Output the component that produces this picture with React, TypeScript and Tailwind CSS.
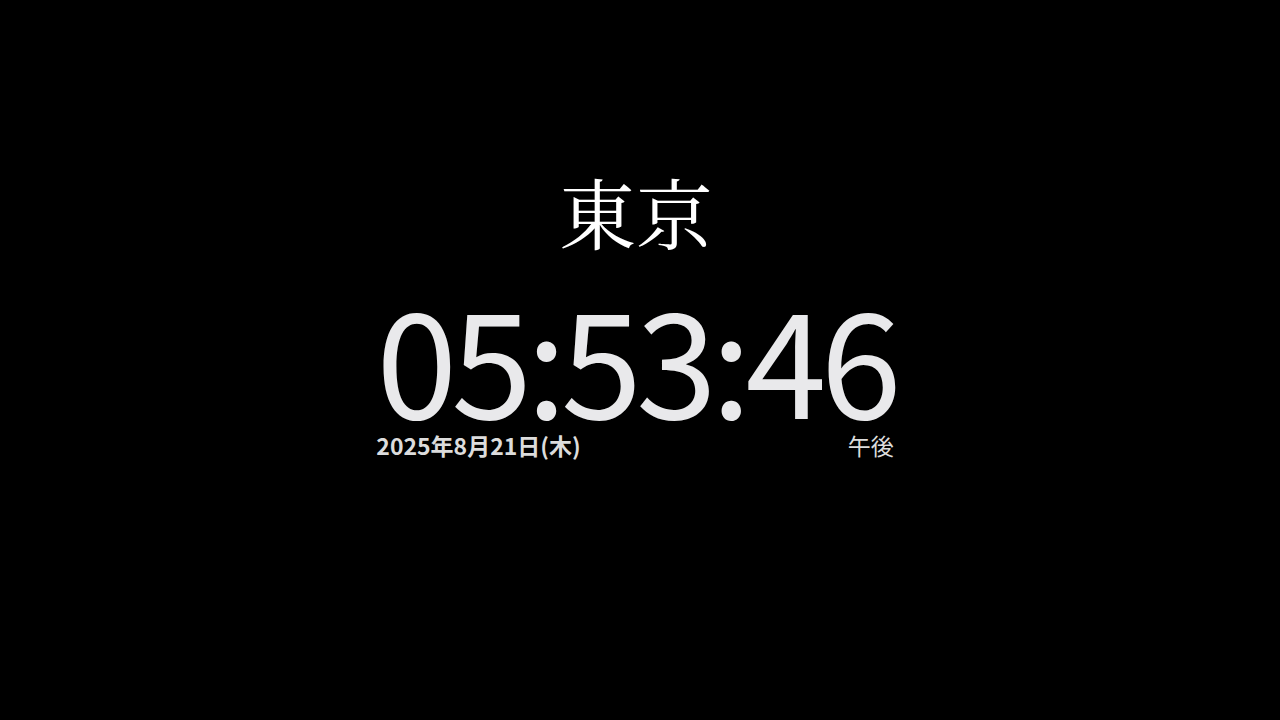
import React from 'react';

const App: React.FC = () => {
  return (
    <div className="w-[1280px] h-[720px] bg-black flex flex-col items-center pt-[172px]">
      <div className="flex flex-col items-stretch mr-[8px]">
        {/* City */}
        <h1
          className="text-center text-white text-[77px] leading-none"
          style={{ fontFamily: '"Noto Serif CJK JP", "Noto Serif JP", serif' }}
        >
          東京
        </h1>

        {/* Time */}
        <div
          className="mt-[47px] text-[#e9e9eb] text-[146px] leading-[120px] tracking-[-6px]"
          style={{ fontFamily: '"Noto Sans CJK JP", "Noto Sans", sans-serif' }}
        >
          05:53:46
        </div>

        {/* Date row */}
        <div
          className="flex justify-between text-[#dcdcdc] text-[23px] leading-none mt-[18px] pr-[2px]"
          style={{ fontFamily: '"Noto Sans CJK JP", "Noto Sans", sans-serif' }}
        >
          <span className="font-semibold">2025年8月21日(木)</span>
          <span>午後</span>
        </div>
      </div>
    </div>
  );
};

export default App;
